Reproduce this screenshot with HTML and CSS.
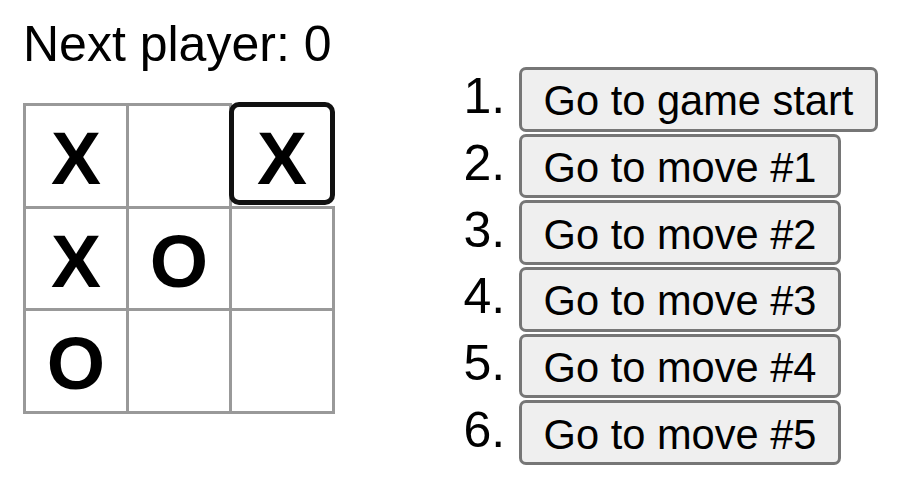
FILE: index.html
```html
<!DOCTYPE html>
<html lang="en">
<head>
<meta charset="utf-8">
<title>Tic-Tac-Toe</title>
<link rel="stylesheet" href="styles.css">
</head>
<body>
<div class="game">
  <div class="game-board">
    <div class="status">Next player: 0</div>
    <div class="board">
      <button class="square">X</button>
      <button class="square"></button>
      <button class="square focused">X</button>
      <button class="square">X</button>
      <button class="square">O</button>
      <button class="square"></button>
      <button class="square">O</button>
      <button class="square"></button>
      <button class="square"></button>
    </div>
  </div>
  <div class="game-info">
    <ol class="moves">
      <li><button class="move-btn">Go to game start</button></li>
      <li><button class="move-btn">Go to move #1</button></li>
      <li><button class="move-btn">Go to move #2</button></li>
      <li><button class="move-btn">Go to move #3</button></li>
      <li><button class="move-btn">Go to move #4</button></li>
      <li><button class="move-btn">Go to move #5</button></li>
    </ol>
  </div>
</div>
</body>
</html>
```
FILE: styles.css
```css
html, body {
  margin: 0;
  background: #ffffff;
}

body {
  font-family: "Liberation Sans", Arial, sans-serif;
  font-size: 50px;
  color: #000000;
}

.game {
  display: flex;
  align-items: flex-start;
  padding: 16px 0 0 23px;
}

.status {
  font-size: 50px;
  line-height: 57.5px;
  margin-bottom: 29.5px;
  white-space: nowrap;
}

.board {
  display: grid;
  grid-template-columns: repeat(3, 103px);
  grid-template-rows: repeat(3, 102.5px);
}

.square {
  box-sizing: border-box;
  width: 106px;
  height: 105.5px;
  margin: 0;
  padding: 6px 0 0;
  background: #ffffff;
  border: 3px solid #999999;
  border-radius: 0;
  font-family: "Liberation Sans", Arial, sans-serif;
  font-size: 75px;
  font-weight: bold;
  line-height: 93px;
  color: #000000;
  text-align: center;
  display: block;
  overflow: visible;
}

.square.focused {
  border: 5px solid #111111;
  border-radius: 10px;
  height: 103px;
  margin-top: -1px;
  padding-top: 5px;
}

.game-info {
  margin-left: 62px;
}

.moves {
  margin: 50px 0 0;
  padding: 0 0 0 125px;
  list-style: decimal outside;
}

.moves li {
  font-size: 50px;
  line-height: 57.5px;
  white-space: nowrap;
}

.move-btn {
  display: inline-block;
  vertical-align: -2px;
  margin: 1px 0;
  padding: 7.35px 21.6px 3.35px;
  background: #efefef;
  border: 3px solid #767676;
  border-radius: 7px;
  font-family: "Liberation Sans", Arial, sans-serif;
  font-size: 41.6px;
  line-height: normal;
  color: #000000;
  white-space: nowrap;
}
```
